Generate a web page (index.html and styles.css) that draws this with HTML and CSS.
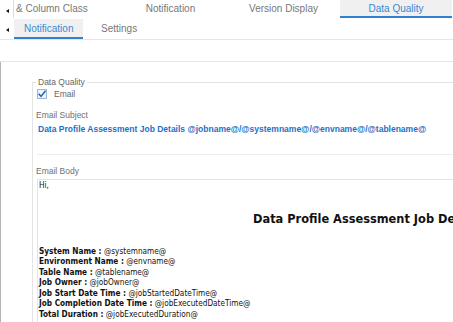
FILE: index.html
```html
<!DOCTYPE html>
<html>
<head>
<meta charset="utf-8">
<link rel="stylesheet" href="styles.css">
</head>
<body>
<div class="page">
  <div class="tabs-main">
    <div class="arrow-cell first"><span class="tri"></span></div>
    <div class="tab tab-cut">&amp; Column Class</div>
    <div class="tab">Notification</div>
    <div class="tab">Version Display</div>
    <div class="tab active">Data Quality</div>
  </div>
  <div class="tabs-sub">
    <div class="arrow-cell"><span class="tri"></span></div>
    <div class="subtab active">Notification</div>
    <div class="subtab">Settings</div>
  </div>
  <div class="toolbar"></div>
  <div class="main">
    <fieldset class="group">
      <legend>Data Quality</legend>
      <label class="check-row">
        <span class="checkbox">
          <svg width="10" height="10" viewBox="0 0 10 10"><path d="M1.6 4.8 L4 7.4 L8.6 1.8" fill="none" stroke="#2a68b0" stroke-width="1.6"/></svg>
        </span>
        <span class="check-label">Email</span>
      </label>
      <div class="field-label subject-label">Email Subject</div>
      <div class="subject">Data Profile Assessment Job Details @jobname@/@systemname@/@envname@/@tablename@</div>
      <div class="separator"></div>
      <div class="field-label body-label">Email Body</div>
      <div class="email-body">
        <div class="line">Hi,</div>
        <div class="mail-heading">Data Profile Assessment Job Details</div>
        <div class="details">
          <div class="line"><b>System Name :</b> @systemname@</div>
          <div class="line"><b>Environment Name :</b> @envname@</div>
          <div class="line"><b>Table Name :</b> @tablename@</div>
          <div class="line"><b>Job Owner :</b> @jobOwner@</div>
          <div class="line"><b>Job Start Date Time :</b> @jobStartedDateTime@</div>
          <div class="line"><b>Job Completion Date Time :</b> @jobExecutedDateTime@</div>
          <div class="line"><b>Total Duration :</b> @jobExecutedDuration@</div>
        </div>
      </div>
    </fieldset>
  </div>
</div>
</body>
</html>
```
FILE: styles.css
```css
html, body {
  margin: 0;
  padding: 0;
  background: #ffffff;
}
body {
  font-family: "Liberation Sans", Arial, sans-serif;
  width: 453px;
  height: 322px;
  overflow: hidden;
}
.page {
  width: 453px;
  height: 322px;
  overflow: hidden;
  display: flex;
  flex-direction: column;
}
.tabs-main {
  display: flex;
  height: 18px;
  flex: none;
}
.arrow-cell {
  width: 13px;
  display: flex;
  align-items: center;
  justify-content: center;
  flex: none;
}
.arrow-cell.first {
  border-right: 1px solid #dcdcdc;
  height: 18px;
  box-sizing: border-box;
  width: 14px;
  padding-top: 4px;
  padding-left: 1px;
}
.tri {
  width: 0;
  height: 0;
  border-top: 2.5px solid transparent;
  border-bottom: 2.5px solid transparent;
  border-right: 3px solid #111;
}
.tab {
  width: 113px;
  box-sizing: border-box;
  flex: none;
  font-size: 10px;
  color: #777;
  display: flex;
  align-items: center;
  justify-content: center;
  height: 16px;
  padding-top: 1px;
  white-space: nowrap;
}
.tab-cut {
  width: 100px;
  justify-content: flex-start;
  padding-left: 2px;
}
.tab.active {
  background: #f0f0f0;
  color: #3b88d6;
  border-bottom: 2px solid #2f7fd3;
  height: 18px;
  width: 112px;
}
.tabs-sub {
  display: flex;
  height: 21px;
  flex: none;
  border-bottom: 1px solid #e6e6e6;
}
.tabs-sub .arrow-cell {
  width: 14px;
  padding-top: 3px;
  padding-left: 1px;
  box-sizing: border-box;
}
.subtab {
  font-size: 10px;
  color: #777;
  margin-top: 1px;
  height: 16px;
  padding: 1px 0 0 0;
  display: flex;
  align-items: center;
  margin-left: 18px;
}
.subtab.active {
  background: #f0f0f0;
  color: #3b88d6;
  border-bottom: 2px solid #2f7fd3;
  width: 69px;
  padding-left: 10px;
  margin-left: 0;
  box-sizing: border-box;
  height: 20px;
}
.toolbar {
  height: 21px;
  flex: none;
  border-bottom: 1px solid #e6e6e6;
}
.main {
  flex: 1;
  border-left: 1px solid #b4b4b4;
  padding-left: 31px;
  overflow: hidden;
}
.group {
  margin: 15px 0 0 0;
  width: 640px;
  border: 1px solid #e3e3e3;
  border-right: none;
  border-bottom: none;
  padding: 0 0 0 3px;
  height: 400px;
  box-sizing: border-box;
}
.group legend {
  font-size: 8.5px;
  line-height: 11px;
  color: #666;
  padding: 0 2px;
}
.check-row {
  display: flex;
  align-items: center;
  margin-top: 0;
  margin-left: 1px;
  height: 12px;
}
.checkbox {
  width: 10px;
  height: 10px;
  box-sizing: border-box;
  border: 1px solid #9db8d6;
  background: #eef3f9;
  display: flex;
  align-items: center;
  justify-content: center;
}
.checkbox svg {
  display: block;
  flex: none;
}
.check-label {
  font-size: 8.5px;
  color: #666;
  margin-left: 7px;
}
.field-label {
  font-size: 8.5px;
  color: #707070;
  line-height: 11px;
}
.subject-label {
  margin-top: 10px;
}
.subject {
  font-size: 8.5px;
  font-weight: bold;
  color: #1f6fc6;
  margin-top: 3px;
  margin-left: 2px;
  line-height: 11px;
  white-space: nowrap;
}
.separator {
  margin-top: 19px;
  margin-left: 1px;
  border-top: 1px solid #ececec;
}
.body-label {
  margin-top: 11px;
}
.email-body {
  margin-top: 2px;
  margin-left: 1px;
  border-top: 1px solid #dde4ec;
  border-left: 1px solid #dde4ec;
  padding-left: 1px;
  font-family: "DejaVu Sans Condensed", "DejaVu Sans", sans-serif;
  font-size: 8.2px;
  color: #111;
  height: 200px;
}
.line {
  line-height: 10.5px;
  white-space: nowrap;
}
.mail-heading {
  font-family: "DejaVu Sans", sans-serif;
  font-size: 11.4px;
  font-weight: bold;
  line-height: 14px;
  margin-top: 21px;
  padding-left: 214px;
  white-space: nowrap;
}
.details {
  margin-top: 20px;
}
```
